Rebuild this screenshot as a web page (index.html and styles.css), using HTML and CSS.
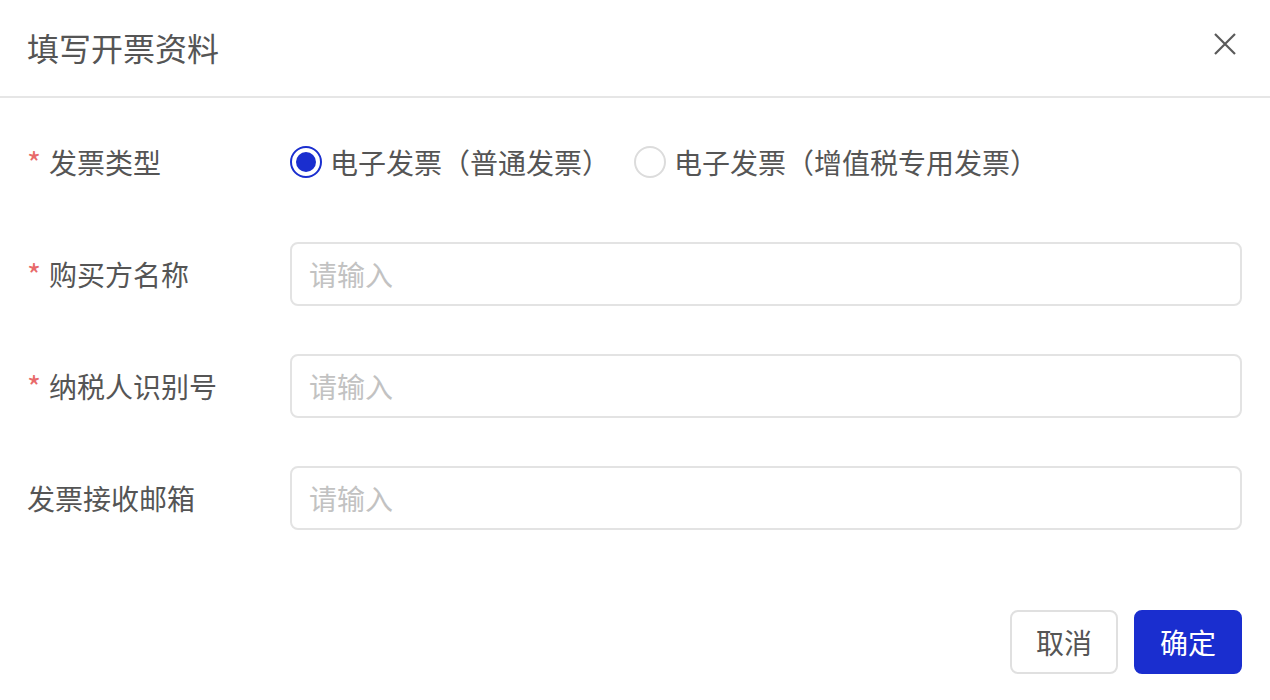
FILE: index.html
```html
<!DOCTYPE html>
<html lang="zh-CN">
<head>
<meta charset="UTF-8" />
<title>填写开票资料</title>
<link rel="stylesheet" href="styles.css">
</head>
<body>

<div class="dialog">
  <div class="dialog-header">
    <h2 class="dialog-title">填写开票资料</h2>
    <span class="close">
      <svg width="24" height="24" viewBox="0 0 24 24"><path d="M2 2 L22 22 M22 2 L2 22" stroke="#5a5a5a" stroke-width="2.2" fill="none"/></svg>
    </span>
  </div>

  <form class="dialog-body">
    <div class="row">
      <label class="label"><span class="req">*</span>发票类型</label>
      <div class="field radios">
        <label class="radio checked"><span class="dot"></span>电子发票（普通发票）</label>
        <label class="radio"><span class="dot"></span>电子发票（增值税专用发票）</label>
      </div>
    </div>
    <div class="row">
      <label class="label"><span class="req">*</span>购买方名称</label>
      <input class="field input" type="text" placeholder="请输入">
    </div>
    <div class="row">
      <label class="label"><span class="req">*</span>纳税人识别号</label>
      <input class="field input" type="text" placeholder="请输入">
    </div>
    <div class="row">
      <label class="label">发票接收邮箱</label>
      <input class="field input" type="text" placeholder="请输入">
    </div>

    <div class="footer">
      <button type="button" class="btn">取消</button>
      <button type="button" class="btn primary">确定</button>
    </div>
  </form>
</div>

</body>
</html>
```

FILE: styles.css
```css
body { margin: 0; background: #fff; font-family: "Noto Sans CJK SC", "Noto Sans", sans-serif; color: #555; }
.dialog { width: 1270px; height: 700px; }
.dialog-header { height: 98px; border-bottom: 2px solid #e6e6e6; display: flex; align-items: center; justify-content: space-between; padding: 0 33px 0 27px; box-sizing: border-box; }
.dialog-title { margin: 0; font-size: 32px; font-weight: 400; color: #555; line-height: 1; padding-bottom: 2px; }
.close { display: flex; width: 24px; height: 24px; margin-top: -8px; }
.dialog-body { padding: 32px 28px 0 27px; display: flex; flex-direction: column; gap: 48px; }
.row { display: flex; align-items: center; height: 64px; }
.label { width: 263px; flex: none; font-size: 28px; color: #555; display: flex; align-items: center; }
.req { color: #e86a6a; width: 22px; font-size: 30px; }
.field { flex: 1; }
.radios { display: flex; align-items: center; gap: 24px; }
.radio { display: flex; align-items: center; font-size: 28px; color: #555; gap: 8px; line-height: 1; }
.dot { width: 32px; height: 32px; border: 2px solid #dcdcdc; border-radius: 50%; box-sizing: border-box; display: flex; align-items: center; justify-content: center; }
.radio.checked .dot { border-color: #1a2ecf; }
.radio.checked .dot::after { content: ""; width: 20px; height: 20px; border-radius: 50%; background: #1a2ecf; }
.input { height: 64px; box-sizing: border-box; border: 2px solid #e3e3e3; border-radius: 8px; padding: 0 17px; font-size: 28px; font-family: inherit; color: #555; outline: none; }
.input::placeholder { color: #c2c2c2; }
.footer { display: flex; justify-content: flex-end; gap: 16px; margin-top: 32px; }
.btn { width: 108px; height: 64px; border: 2px solid #e0e0e0; border-radius: 8px; background: #fff; font-size: 28px; font-family: inherit; color: #555; cursor: pointer; }
.btn.primary { background: #1a2ecf; border-color: #1a2ecf; color: #fff; }
```
